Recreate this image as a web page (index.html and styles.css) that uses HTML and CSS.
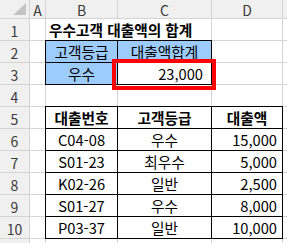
FILE: index.html
```html
<!DOCTYPE html>
<html lang="ko">
<head>
<meta charset="utf-8">
<link rel="stylesheet" href="styles.css">
</head>
<body>
<div class="sheet">
  <div class="corner"><span class="tri"></span></div>
  <div class="ch">A</div><div class="ch">B</div><div class="ch">C</div><div class="ch">D</div><div class="ch"></div>

  <div class="rh">1</div><div class="c"></div><div class="c title">우수고객 대출액의 합계</div><div class="c"></div><div class="c"></div>

  <div class="rh">2</div><div class="c"></div><div class="c bd blue ctr">고객등급</div><div class="c bd blue ctr">대출액합계</div><div class="c"></div><div class="c"></div>

  <div class="rh">3</div><div class="c"></div><div class="c bd blue ctr">우수</div><div class="c bd num wide">23,000</div><div class="c"></div><div class="c"></div>

  <div class="rh">4</div><div class="c"></div><div class="c"></div><div class="c"></div><div class="c"></div><div class="c"></div>

  <div class="rh">5</div><div class="c"></div><div class="c bd ctr bold">대출번호</div><div class="c bd ctr bold">고객등급</div><div class="c bd ctr bold">대출액</div><div class="c"></div>

  <div class="rh">6</div><div class="c"></div><div class="c bd ctr">C04-08</div><div class="c bd ctr">우수</div><div class="c bd num">15,000</div><div class="c"></div>

  <div class="rh">7</div><div class="c"></div><div class="c bd ctr">S01-23</div><div class="c bd ctr">최우수</div><div class="c bd num">5,000</div><div class="c"></div>

  <div class="rh">8</div><div class="c"></div><div class="c bd ctr">K02-26</div><div class="c bd ctr">일반</div><div class="c bd num">2,500</div><div class="c"></div>

  <div class="rh">9</div><div class="c"></div><div class="c bd ctr">S01-27</div><div class="c bd ctr">우수</div><div class="c bd num">8,000</div><div class="c"></div>

  <div class="rh">10</div><div class="c"></div><div class="c bd ctr">P03-37</div><div class="c bd ctr">일반</div><div class="c bd num">10,000</div><div class="c"></div>

  <div class="rh"></div><div class="c"></div><div class="c"></div><div class="c"></div><div class="c"></div><div class="c"></div>

  <div class="highlight"></div>
</div>
</body>
</html>
```
FILE: styles.css
```css
html, body {
  margin: 0;
  padding: 0;
  background: #ffffff;
}

.sheet {
  position: relative;
  width: 287px;
  height: 243px;
  overflow: hidden;
  display: grid;
  grid-template-columns: 29px 15px 71px 93px 70px 1fr;
  grid-template-rows: 18px repeat(10, 21px) 1fr;
  gap: 1px;
  background: #d4d4d4;
  font-family: "Noto Sans CJK KR", "Noto Sans", sans-serif;
  font-size: 14.7px;
  color: #000;
}

.corner {
  background: #f0f0f0;
  position: relative;
}

.tri {
  position: absolute;
  right: 3px;
  bottom: 3px;
  width: 0;
  height: 0;
  border-left: 13px solid transparent;
  border-bottom: 12px solid #c4c4c4;
}

.ch {
  background: #f0f0f0;
  color: #3a3a3a;
  display: flex;
  align-items: center;
  justify-content: center;
  font-size: 14px;
  line-height: 1;
  padding-top: 1px;
}

.rh {
  background: #f0f0f0;
  color: #3a3a3a;
  display: flex;
  align-items: center;
  justify-content: center;
  font-size: 14px;
  line-height: 1;
  padding-top: 2px;
}

.c {
  background: #ffffff;
  display: flex;
  align-items: center;
  line-height: 1;
  padding-top: 2px;
  white-space: nowrap;
  min-width: 0;
}

.title {
  grid-column: span 2;
  font-weight: bold;
  padding-left: 3px;
}

.bd {
  box-shadow: 0 0 0 1px #000;
}

.blue {
  background: #9dcbfc;
}

.ctr {
  justify-content: center;
}

.bold {
  font-weight: bold;
}

.num {
  justify-content: flex-end;
  padding-right: 5px;
}

.num.wide {
  padding-right: 8px;
}

.highlight {
  position: absolute;
  left: 112px;
  top: 59px;
  width: 96px;
  height: 23px;
  border: 4px solid #ff0000;
}
```
